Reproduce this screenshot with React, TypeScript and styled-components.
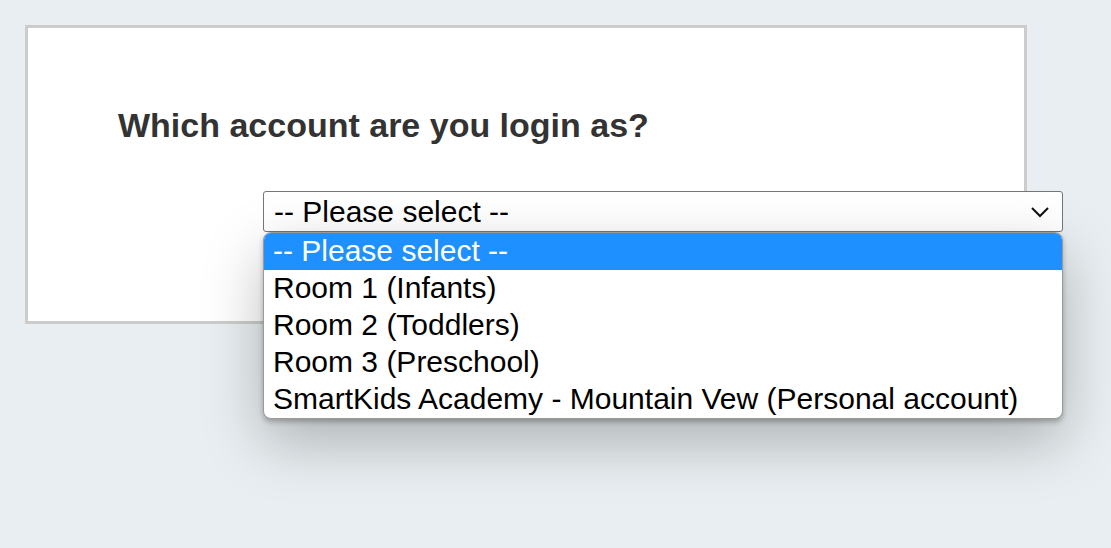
import React from 'react';
import styled, { createGlobalStyle } from 'styled-components';

const GlobalStyle = createGlobalStyle`
  html, body {
    margin: 0;
    padding: 0;
    background: #e8eef1;
    font-family: "Liberation Sans", Arial, sans-serif;
  }
`;

const Page = styled.div`
  width: 1111px;
  height: 548px;
  padding: 25px 0 0 25px;
  box-sizing: border-box;
  overflow: hidden;
`;

const Card = styled.div`
  width: 1002px;
  height: 299px;
  box-sizing: border-box;
  background: #fff;
  border: 3px solid #cccccc;
  padding: 74px 0 0 90px;
`;

const Heading = styled.h2`
  margin: 0;
  font-size: 34px;
  line-height: 46px;
  font-weight: bold;
  color: #333333;
`;

const SelectWrap = styled.div`
  position: relative;
  margin: 43px 0 0 145px;
  width: 800px;
`;

const SelectBox = styled.div`
  height: 41px;
  box-sizing: border-box;
  border: 1.5px solid #767676;
  border-radius: 3px;
  background: #fff;
  display: flex;
  align-items: center;
  justify-content: space-between;
  padding: 0 12px 0 10px;
  font-size: 30px;
  color: #000;
`;

const Menu = styled.ul`
  position: absolute;
  top: 41px;
  left: 0;
  width: 800px;
  box-sizing: border-box;
  margin: 0;
  padding: 0;
  list-style: none;
  background: #fff;
  border: 1px solid #9a9a9a;
  border-radius: 8px;
  overflow: hidden;
  box-shadow: 0 3px 5px rgba(0, 0, 0, 0.25), 0 22px 60px rgba(0, 0, 0, 0.26);
`;

const Option = styled.li<{ $active?: boolean }>`
  height: 37px;
  line-height: 36px;
  padding: 0 9px;
  font-size: 30px;
  white-space: nowrap;
  color: ${(p) => (p.$active ? '#fff' : '#000')};
  background: ${(p) => (p.$active ? '#1e90ff' : 'transparent')};
`;

const options = [
  '-- Please select --',
  'Room 1 (Infants)',
  'Room 2 (Toddlers)',
  'Room 3 (Preschool)',
  'SmartKids Academy - Mountain Vew (Personal account)',
];

export default function App() {
  return (
    <>
      <GlobalStyle />
      <Page>
        <Card>
          <Heading>Which account are you login as?</Heading>
          <SelectWrap>
            <SelectBox>
              <span>-- Please select --</span>
              <svg width="20" height="12" viewBox="0 0 20 12">
                <polyline points="2,2 10,10 18,2" fill="none" stroke="#111" strokeWidth="2" />
              </svg>
            </SelectBox>
            <Menu>
              {options.map((o, i) => (
                <Option key={o} $active={i === 0}>
                  {o}
                </Option>
              ))}
            </Menu>
          </SelectWrap>
        </Card>
      </Page>
    </>
  );
}
